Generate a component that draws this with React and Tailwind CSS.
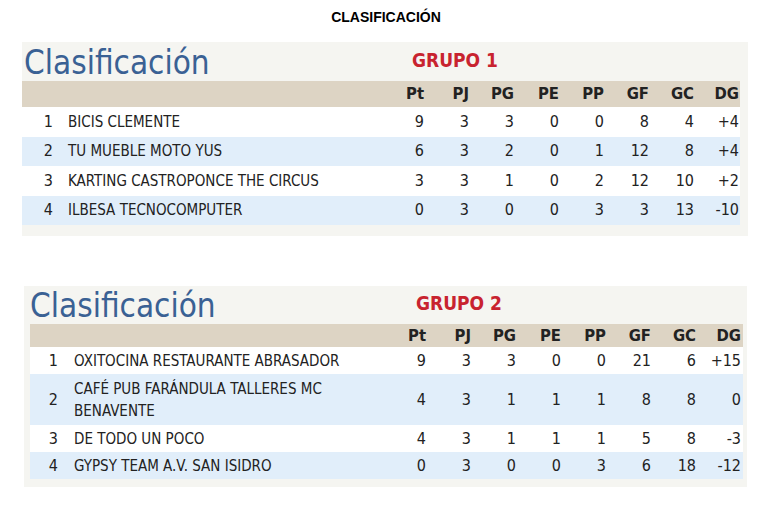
const groups = [
  {
    name: "GRUPO 1",
    rows: [
      ["1", "BICIS CLEMENTE", 9, 3, 3, 0, 0, 8, 4, "+4"],
      ["2", "TU MUEBLE MOTO YUS", 6, 3, 2, 0, 1, 12, 8, "+4"],
      ["3", "KARTING CASTROPONCE THE CIRCUS", 3, 3, 1, 0, 2, 12, 10, "+2"],
      ["4", "ILBESA TECNOCOMPUTER", 0, 3, 0, 0, 3, 3, 13, "-10"],
    ],
  },
  {
    name: "GRUPO 2",
    rows: [
      ["1", "OXITOCINA RESTAURANTE ABRASADOR", 9, 3, 3, 0, 0, 21, 6, "+15"],
      ["2", "CAFÉ PUB FARÁNDULA TALLERES MC BENAVENTE", 4, 3, 1, 1, 1, 8, 8, "0"],
      ["3", "DE TODO UN POCO", 4, 3, 1, 1, 1, 5, 8, "-3"],
      ["4", "GYPSY TEAM A.V. SAN ISIDRO", 0, 3, 0, 0, 3, 6, 18, "-12"],
    ],
  },
];

const heads = ["Pt", "PJ", "PG", "PE", "PP", "GF", "GC", "DG"];
const narrow = "font-['DejaVu_Sans_Condensed','Roboto',sans-serif]";

const Group1 = ({ g }) => (
  <div className={`ml-[22px] w-[726px] bg-[#f5f5f1] pr-[8px] pb-[11px] ${narrow}`}>
    <div className="h-[39px] flex items-start">
      <span className="w-[390px] pl-[2px] pt-[1px] text-[33px] leading-[40px] text-[#3a6194]">Clasificación</span>
      <span className="pt-[6px] text-[19px] leading-[24px] font-bold text-[#c8232f]">{g.name}</span>
    </div>
    <div className="grid grid-cols-[31px_1fr_repeat(8,45px)] pr-[1px] h-[26px] items-center bg-[#ddd4c4] text-[16.5px] font-bold text-[#222]">
      <span />
      <span />
      {heads.map((h) => (
        <span key={h} className="text-right">{h}</span>
      ))}
    </div>
    {g.rows.map((r, i) => (
      <div
        key={r[0]}
        className={`grid grid-cols-[31px_1fr_repeat(8,45px)] pr-[1px] h-[29.5px] items-center text-[16px] text-[#222] ${i % 2 ? "bg-[#e1eefa]" : "bg-white"}`}
      >
        <span className="text-right">{r[0]}</span>
        <span className="pl-[15px] text-[15px]">{r[1]}</span>
        {r.slice(2).map((v, j) => (
          <span key={j} className="text-right">{v}</span>
        ))}
      </div>
    ))}
  </div>
);

const Group2 = ({ g }) => (
  <div className={`ml-[24px] w-[723px] bg-[#f5f5f1] pl-[6px] pr-[4px] pb-[8px] ${narrow}`}>
    <div className="h-[38px] flex items-start">
      <span className="w-[386px] pt-[0px] text-[33px] leading-[40px] text-[#3a6194]">Clasificación</span>
      <span className="pt-[5px] text-[19px] leading-[24px] font-bold text-[#c8232f]">{g.name}</span>
    </div>
    <div className="grid grid-cols-[28px_1fr_repeat(8,45px)] pr-[2px] h-[23px] items-center bg-[#ddd4c4] text-[16.5px] font-bold text-[#222]">
      <span />
      <span />
      {heads.map((h) => (
        <span key={h} className="text-right">{h}</span>
      ))}
    </div>
    {g.rows.map((r, i) => (
      <div
        key={r[0]}
        className={`grid grid-cols-[28px_1fr_repeat(8,45px)] pr-[2px] items-center text-[16px] text-[#222] ${i % 2 ? "bg-[#e1eefa]" : "bg-white"} ${i === 1 ? "min-h-[51px]" : "min-h-[27px]"}`}
      >
        <span className="text-right">{r[0]}</span>
        <span className="pl-[16px] pr-[6px] text-[15px] leading-[22px]">{r[1]}</span>
        {r.slice(2).map((v, j) => (
          <span key={j} className="text-right">{v}</span>
        ))}
      </div>
    ))}
  </div>
);

export default function App() {
  return (
    <div className="w-[782px] h-[519px] bg-white overflow-hidden">
      <div className="pt-[7px] h-[42px] pr-[10px] text-center font-['Liberation_Sans',sans-serif] text-[14px] font-bold text-black">
        CLASIFICACIÓN
      </div>
      <Group1 g={groups[0]} />
      <div className="h-[50px]" />
      <Group2 g={groups[1]} />
    </div>
  );
}
